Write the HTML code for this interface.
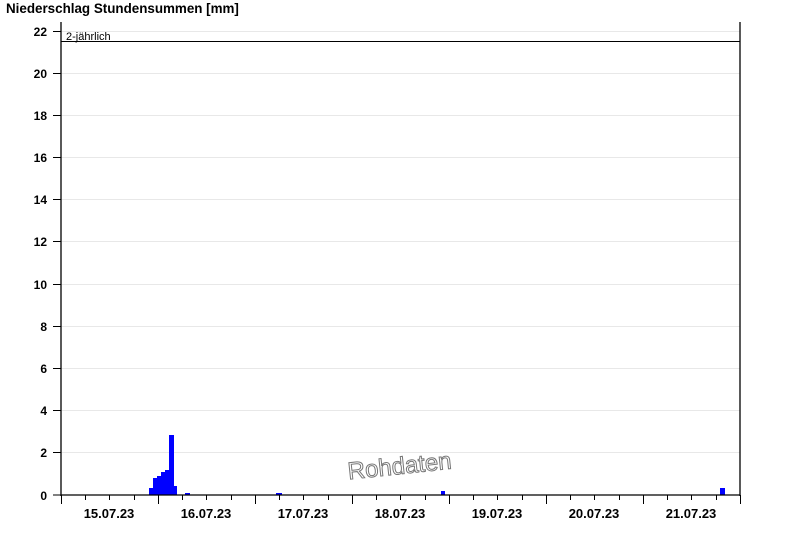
<!DOCTYPE html>
<html><head><meta charset="utf-8"><style>
html,body{margin:0;padding:0;background:#fff;}
svg{display:block;font-family:"Liberation Sans",Arial,sans-serif;}
</style></head><body>
<svg width="800" height="550" viewBox="0 0 800 550" xmlns="http://www.w3.org/2000/svg">
<rect width="800" height="550" fill="#fff"/>
<text x="6" y="13" font-size="13.4" font-weight="bold">Niederschlag Stundensummen [mm]</text>
<g stroke="#e8e8e8" stroke-width="1">
<line x1="61" y1="452.5" x2="740" y2="452.5"/>
<line x1="61" y1="410.5" x2="740" y2="410.5"/>
<line x1="61" y1="368.5" x2="740" y2="368.5"/>
<line x1="61" y1="326.5" x2="740" y2="326.5"/>
<line x1="61" y1="284.5" x2="740" y2="284.5"/>
<line x1="61" y1="241.5" x2="740" y2="241.5"/>
<line x1="61" y1="199.5" x2="740" y2="199.5"/>
<line x1="61" y1="157.5" x2="740" y2="157.5"/>
<line x1="61" y1="115.5" x2="740" y2="115.5"/>
<line x1="61" y1="73.5" x2="740" y2="73.5"/>
<line x1="61" y1="31.5" x2="740" y2="31.5"/>
</g>
<g fill="#0000ff">
<rect x="149" y="488" width="4" height="7"/>
<rect x="153" y="478" width="4" height="17"/>
<rect x="157" y="476" width="4" height="19"/>
<rect x="161" y="472" width="4" height="23"/>
<rect x="165" y="470" width="4" height="25"/>
<rect x="169" y="435" width="5" height="60"/>
<rect x="174" y="486" width="3" height="9"/>
<rect x="185" y="493" width="5" height="2"/>
<rect x="276" y="493" width="6" height="2"/>
<rect x="441" y="491" width="4" height="4"/>
<rect x="720" y="488" width="5" height="7"/>
</g>
<line x1="61" y1="41.5" x2="740" y2="41.5" stroke="#000"/>
<text x="66" y="40" font-size="11">2-jährlich</text>
<text x="400" y="474" font-size="24" fill="#fff" stroke="#777" stroke-width="1" text-anchor="middle" transform="rotate(-6 400 470)">Rohdaten</text>
<g stroke="#000" stroke-width="1.3">
<line x1="61" y1="22" x2="61" y2="496"/>
<line x1="740" y1="22" x2="740" y2="496"/>
<line x1="61" y1="495" x2="740" y2="495"/>
</g>
<g stroke="#000" stroke-width="1">
<line x1="53" y1="495" x2="61" y2="495"/><line x1="53" y1="452.5" x2="61" y2="452.5"/><line x1="53" y1="410.5" x2="61" y2="410.5"/><line x1="53" y1="368.5" x2="61" y2="368.5"/><line x1="53" y1="326.5" x2="61" y2="326.5"/><line x1="53" y1="284.5" x2="61" y2="284.5"/><line x1="53" y1="241.5" x2="61" y2="241.5"/><line x1="53" y1="199.5" x2="61" y2="199.5"/><line x1="53" y1="157.5" x2="61" y2="157.5"/><line x1="53" y1="115.5" x2="61" y2="115.5"/><line x1="53" y1="73.5" x2="61" y2="73.5"/><line x1="53" y1="31.5" x2="61" y2="31.5"/>
</g>
<g font-size="12" font-weight="bold" text-anchor="end">
<text x="47" y="500">0</text><text x="47" y="457">2</text><text x="47" y="415">4</text><text x="47" y="373">6</text><text x="47" y="331">8</text><text x="47" y="289">10</text><text x="47" y="246">12</text><text x="47" y="204">14</text><text x="47" y="162">16</text><text x="47" y="120">18</text><text x="47" y="78">20</text><text x="47" y="36">22</text>
</g>
<g stroke="#000" stroke-width="1">
<path d="M61.5 495V504M158.5 495V504M255.5 495V504M352.5 495V504M449.5 495V504M546.5 495V504M643.5 495V504M740.5 495V504"/>
<path d="M85.5 495V500M109.5 495V500M134.5 495V500M182.5 495V500M206.5 495V500M231.5 495V500M279.5 495V500M303.5 495V500M328.5 495V500M376.5 495V500M400.5 495V500M425.5 495V500M473.5 495V500M497.5 495V500M522.5 495V500M570.5 495V500M594.5 495V500M619.5 495V500M667.5 495V500M691.5 495V500M716.5 495V500"/>
</g>
<g font-size="13" font-weight="bold" text-anchor="middle">
<text x="109" y="518">15.07.23</text><text x="206" y="518">16.07.23</text><text x="303" y="518">17.07.23</text><text x="400" y="518">18.07.23</text><text x="497" y="518">19.07.23</text><text x="594" y="518">20.07.23</text><text x="691" y="518">21.07.23</text>
</g>
</svg>
</body></html>
